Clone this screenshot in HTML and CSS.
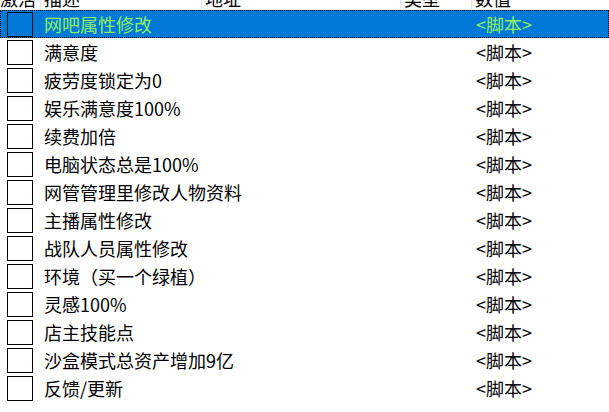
FILE: index.html
```html
<!DOCTYPE html>
<html lang="zh-CN">
<head>
    <meta charset="UTF-8">
    <title>Cheat Table</title>
    <link rel="stylesheet" href="styles.css">
</head>
<body>
    <div class="table">
        <!-- Column header (scrolled, partly hidden) -->
        <div class="header">
            <div class="head-cell"><span>激活</span></div>
            <div class="head-cell"><span>描述</span></div>
            <div class="head-cell"><span>地址</span></div>
            <div class="head-cell"><span>类型</span></div>
            <div class="head-cell last"><span>数值</span></div>
        </div>

        <div class="rows">
            <div class="row selected">
                <div class="cell check"><span class="box"></span></div>
                <div class="cell desc">网吧属性修改</div>
                <div class="cell"></div>
                <div class="cell"></div>
                <div class="cell value">&lt;脚本&gt;</div>
            </div>
            <div class="row">
                <div class="cell check"><span class="box"></span></div>
                <div class="cell desc">满意度</div>
                <div class="cell"></div>
                <div class="cell"></div>
                <div class="cell value">&lt;脚本&gt;</div>
            </div>
            <div class="row">
                <div class="cell check"><span class="box"></span></div>
                <div class="cell desc">疲劳度锁定为0</div>
                <div class="cell"></div>
                <div class="cell"></div>
                <div class="cell value">&lt;脚本&gt;</div>
            </div>
            <div class="row">
                <div class="cell check"><span class="box"></span></div>
                <div class="cell desc">娱乐满意度100%</div>
                <div class="cell"></div>
                <div class="cell"></div>
                <div class="cell value">&lt;脚本&gt;</div>
            </div>
            <div class="row">
                <div class="cell check"><span class="box"></span></div>
                <div class="cell desc">续费加倍</div>
                <div class="cell"></div>
                <div class="cell"></div>
                <div class="cell value">&lt;脚本&gt;</div>
            </div>
            <div class="row">
                <div class="cell check"><span class="box"></span></div>
                <div class="cell desc">电脑状态总是100%</div>
                <div class="cell"></div>
                <div class="cell"></div>
                <div class="cell value">&lt;脚本&gt;</div>
            </div>
            <div class="row">
                <div class="cell check"><span class="box"></span></div>
                <div class="cell desc">网管管理里修改人物资料</div>
                <div class="cell"></div>
                <div class="cell"></div>
                <div class="cell value">&lt;脚本&gt;</div>
            </div>
            <div class="row">
                <div class="cell check"><span class="box"></span></div>
                <div class="cell desc">主播属性修改</div>
                <div class="cell"></div>
                <div class="cell"></div>
                <div class="cell value">&lt;脚本&gt;</div>
            </div>
            <div class="row">
                <div class="cell check"><span class="box"></span></div>
                <div class="cell desc">战队人员属性修改</div>
                <div class="cell"></div>
                <div class="cell"></div>
                <div class="cell value">&lt;脚本&gt;</div>
            </div>
            <div class="row">
                <div class="cell check"><span class="box"></span></div>
                <div class="cell desc">环境（买一个绿植）</div>
                <div class="cell"></div>
                <div class="cell"></div>
                <div class="cell value">&lt;脚本&gt;</div>
            </div>
            <div class="row">
                <div class="cell check"><span class="box"></span></div>
                <div class="cell desc">灵感100%</div>
                <div class="cell"></div>
                <div class="cell"></div>
                <div class="cell value">&lt;脚本&gt;</div>
            </div>
            <div class="row">
                <div class="cell check"><span class="box"></span></div>
                <div class="cell desc">店主技能点</div>
                <div class="cell"></div>
                <div class="cell"></div>
                <div class="cell value">&lt;脚本&gt;</div>
            </div>
            <div class="row">
                <div class="cell check"><span class="box"></span></div>
                <div class="cell desc">沙盒模式总资产增加9亿</div>
                <div class="cell"></div>
                <div class="cell"></div>
                <div class="cell value">&lt;脚本&gt;</div>
            </div>
            <div class="row">
                <div class="cell check"><span class="box"></span></div>
                <div class="cell desc">反馈/更新</div>
                <div class="cell"></div>
                <div class="cell"></div>
                <div class="cell value">&lt;脚本&gt;</div>
            </div>
        </div>
    </div>
</body>
</html>
```

FILE: styles.css
```css
* {
    margin: 0;
    padding: 0;
    box-sizing: border-box;
}

body {
    font-family: "Noto Sans CJK SC", "Noto Sans", sans-serif;
    font-size: 18px;
    color: #000;
    background: white;
    width: 609px;
    height: 412px;
    overflow: hidden;
}

.table {
    width: 609px;
}

/* header is scrolled up, only its bottom shows */
.header {
    display: grid;
    grid-template-columns: 41px 161px 199px 71px 1fr;
    height: 10px;
    overflow: hidden;
}

.head-cell {
    display: flex;
    align-items: flex-end;
    border-right: 1px solid #e5e5e5;
    height: 9px;
    padding-left: 3px;
    overflow: hidden;
}

.head-cell:first-child {
    padding-left: 0;
}

.head-cell.last {
    border-right: none;
}

.head-cell span {
    line-height: 18px;
    margin-bottom: 2px;
    white-space: nowrap;
}

.row {
    display: grid;
    grid-template-columns: 41px 161px 199px 71px 1fr;
    height: 28px;
    align-items: center;
}

.cell {
    white-space: nowrap;
    line-height: 28px;
}

.check {
    display: flex;
    align-items: flex-start;
    height: 28px;
    padding: 2px 0 0 7px;
}

.box {
    width: 26px;
    height: 25px;
    border: 1px solid #000;
    background: transparent;
}

.desc {
    padding-left: 3px;
}

.value {
    padding-left: 4px;
}

.row.selected {
    background: #0078d7;
    color: #8ff060;
    outline: 1px dotted #000;
    outline-offset: -1px;
}

.row.selected .box {
    border-color: #111;
}
```
